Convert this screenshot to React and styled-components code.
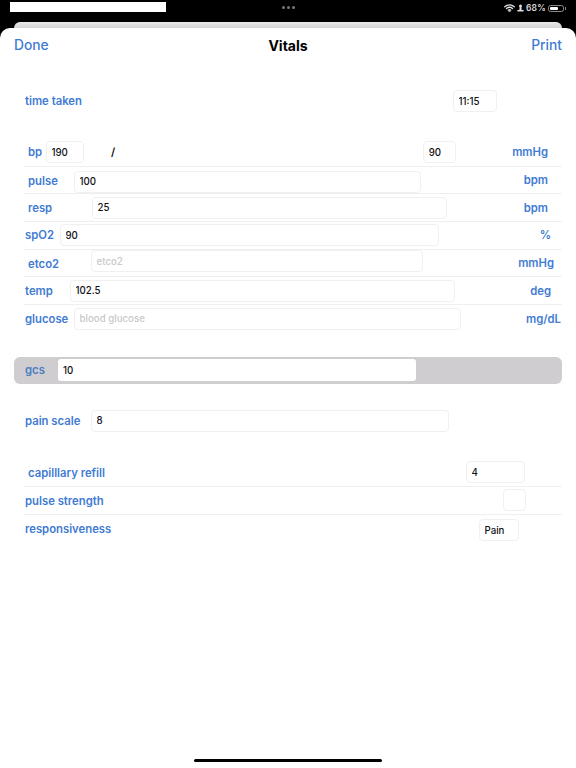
import React from 'react'
import styled, { createGlobalStyle } from 'styled-components'

const BLUE = '#3f7bd3'
const LINE = '#efefef'

const GlobalStyle = createGlobalStyle`
  html, body {
    margin: 0;
    height: 100%;
    background: #000;
  }
  body {
    font-family: Inter, "Liberation Sans", sans-serif;
    -webkit-font-smoothing: antialiased;
  }
`

const Screen = styled.div`
  width: 576px;
  height: 768px;
  display: flex;
  flex-direction: column;
  overflow: hidden;
  background: #000;
`

const StatusBar = styled.div`
  height: 22px;
  flex: none;
  display: grid;
  grid-template-columns: 1fr auto 1fr;
  align-items: start;
  padding: 2px 10px 0 10px;
  box-sizing: border-box;
`

const Redacted = styled.div`
  width: 156px;
  height: 10px;
  background: #fff;
`

const Dots = styled.div`
  display: flex;
  gap: 2px;
  margin-top: 4px;

  span {
    width: 3px;
    height: 3px;
    border-radius: 50%;
    background: #77777b;
  }
`

const StatusRight = styled.div`
  justify-self: end;
  display: flex;
  align-items: center;
  gap: 2px;
  height: 12px;
  color: #d8d8d8;
  font-size: 8.5px;
  font-weight: 600;
  letter-spacing: 0.2px;
`

const Battery = styled.div`
  position: relative;
  width: 16px;
  height: 7px;
  border: 1px solid #8a8a8a;
  border-radius: 2.5px;
  padding: 1px;
  box-sizing: border-box;
  margin-right: 2px;

  &::before {
    content: '';
    display: block;
    width: 68%;
    height: 100%;
    background: #fff;
    border-radius: 1px;
  }

  &::after {
    content: '';
    position: absolute;
    right: -3px;
    top: 1px;
    width: 1px;
    height: 3px;
    background: #8a8a8a;
  }
`

const BackCard = styled.div`
  height: 6px;
  flex: none;
  margin: 0 14px;
  border-radius: 8px 8px 0 0;
  background: linear-gradient(#ecebec, #d4d3d5);
`

const Sheet = styled.div`
  flex: 1;
  display: flex;
  flex-direction: column;
  background: #fff;
  border-radius: 10px 10px 0 0;
  padding: 0 14px;
`

const Nav = styled.div`
  height: 34px;
  flex: none;
  display: grid;
  grid-template-columns: 1fr auto 1fr;
  align-items: center;
`

const NavLink = styled.div`
  color: ${BLUE};
  font-size: 13.8px;
  font-weight: 500;
  text-align: ${({ $end }) => ($end ? 'right' : 'left')};
`

const Title = styled.div`
  color: #000;
  font-size: 14px;
  font-weight: 700;
`

const Group = styled.div`
  flex: none;
  margin: ${({ $top }) => $top}px 0 0 10px;
`

const Row = styled.div`
  display: flex;
  align-items: center;
  height: ${({ $h = 27.7 }) => $h}px;
  box-sizing: border-box;
  border-bottom: 1px solid ${LINE};

  &:last-child {
    border-bottom: none;
  }
`

const Label = styled.div`
  flex: none;
  box-sizing: border-box;
  width: ${({ $w }) => $w}px;
  padding-left: ${({ $indent = 0 }) => $indent}px;
  margin-top: ${({ $nudge = 0 }) => $nudge}px;
  color: ${BLUE};
  font-size: 11.3px;
  font-weight: 600;
  white-space: nowrap;
`

const Field = styled.input`
  flex: none;
  box-sizing: border-box;
  width: ${({ $w }) => $w}px;
  height: 22px;
  margin: ${({ $nudge = 0 }) => $nudge}px ${({ $end = 0 }) => $end}px 0 ${({ $auto }) => ($auto ? 'auto' : '0')};
  padding: 0 0 0 4.5px;
  border: 1px solid #f0f0f0;
  border-radius: 4px;
  outline: none;
  background: #fff;
  color: #111;
  font: 500 9.7px Inter, "Liberation Sans", sans-serif;

  &::placeholder {
    color: #c9c9c9;
    opacity: 1;
  }
`

const Slash = styled.div`
  flex: 1;
  padding-left: 27px;
  color: #111;
  font-size: 11px;
  font-weight: 600;
`

const Unit = styled.div`
  margin-left: auto;
  padding-right: ${({ $right }) => $right}px;
  color: ${BLUE};
  font-size: 11.3px;
  font-weight: 600;
`

const GcsBand = styled.div`
  flex: none;
  display: flex;
  align-items: center;
  height: 27px;
  margin-top: 24px;
  border-radius: 6px;
  background: #cfcdcf;
`

const GcsLabel = styled(Label)`
  padding-left: 11px;
  color: #4a7cc4;
`

const GcsField = styled(Field)`
  border: none;
  border-radius: 3px;
  padding-left: 5px;
`

const HomeBar = styled.div`
  flex: none;
  width: 188px;
  height: 3px;
  margin: auto auto 6px;
  border-radius: 2px;
  background: #000;
`

const Wifi = () => (
  <svg width="11" height="8" viewBox="0 0 22 16" fill="none" stroke="#e4e4e4" strokeWidth="2.6" strokeLinecap="round">
    <path d="M1.5 5.5c5.500-5 13.500-5 19 0" />
    <path d="M5 9c3.500-3 8.500-3 12 0" />
    <path d="M8.500 12.300c1.500-1.200 3.500-1.200 5 0" />
    <circle cx="11" cy="14.500" r="0.6" />
  </svg>
)

const Orientation = () => (
  <svg width="7" height="8" viewBox="0 0 14 16" fill="#dcdcdc">
    <circle cx="7" cy="4" r="3" />
    <path d="M5.500 6h3l1 6h-5z" />
    <rect x="1" y="12" width="12" height="3" rx="0.5" />
  </svg>
)

const vitals = [
  { label: 'pulse', w: 50, indent: 4, field: 347, value: '100', unit: 'bpm', right: 14, fieldNudge: 3, labelNudge: 1 },
  { label: 'resp', w: 68, indent: 4, field: 355, value: '25', unit: 'bpm', right: 14 },
  { label: 'spO2', w: 36, indent: 1, field: 379, value: '90', unit: '%', right: 11 },
  { label: 'etco2', w: 67, indent: 4, field: 332, hint: 'etco2', unit: 'mmHg', right: 8, fieldNudge: -4, labelNudge: 1 },
  { label: 'temp', w: 46, indent: 1, field: 385, value: '102.5', unit: 'deg', right: 11 },
  { label: 'glucose', w: 50, indent: 1, field: 387, hint: 'blood glucose', unit: 'mg/dL', right: 1 },
]

const App = () => (
  <>
    <GlobalStyle />
    <Screen>
      <StatusBar>
        <Redacted />
        <Dots>
          <span />
          <span />
          <span />
        </Dots>
        <StatusRight>
          <Wifi />
          <Orientation />
          <span>68%</span>
          <Battery />
        </StatusRight>
      </StatusBar>
      <BackCard />
      <Sheet>
        <Nav>
          <NavLink>Done</NavLink>
          <Title>Vitals</Title>
          <NavLink $end>Print</NavLink>
        </Nav>

        <Group $top={26}>
          <Row $h={26}>
            <Label $w={60} $indent={1}>time taken</Label>
            <Field $auto $end={65} $w={44} defaultValue="11:15" readOnly />
          </Row>
        </Group>

        <Group $top={25}>
          <Row>
            <Label $w={22} $indent={4}>bp</Label>
            <Field $w={38} defaultValue="190" readOnly />
            <Slash>/</Slash>
            <Field $w={33} $end={56} defaultValue="90" readOnly />
            <Unit $right={14}>mmHg</Unit>
          </Row>
          {vitals.map((v) => (
            <Row key={v.label}>
              <Label $w={v.w} $indent={v.indent} $nudge={v.labelNudge}>{v.label}</Label>
              <Field $w={v.field} $nudge={v.fieldNudge} defaultValue={v.value} placeholder={v.hint} readOnly />
              <Unit $right={v.right}>{v.unit}</Unit>
            </Row>
          ))}
        </Group>

        <GcsBand>
          <GcsLabel $w={44}>gcs</GcsLabel>
          <GcsField $w={358} defaultValue="10" readOnly />
        </GcsBand>

        <Group $top={26}>
          <Row $h={22}>
            <Label $w={67} $indent={1}>pain scale</Label>
            <Field $w={358} defaultValue="8" readOnly />
          </Row>
        </Group>

        <Group $top={27}>
          <Row $h={28}>
            <Label $w={120} $indent={4} $nudge={1}>capilllary refill</Label>
            <Field $auto $end={37} $w={59} defaultValue="4" readOnly />
          </Row>
          <Row $h={28}>
            <Label $w={120} $indent={1} $nudge={1}>pulse strength</Label>
            <Field $auto $end={36} $w={23} readOnly />
          </Row>
          <Row $h={28}>
            <Label $w={120} $indent={1}>responsiveness</Label>
            <Field $auto $end={43} $w={40} $nudge={3} defaultValue="Pain" readOnly />
          </Row>
        </Group>

        <HomeBar />
      </Sheet>
    </Screen>
  </>
)

export default App
